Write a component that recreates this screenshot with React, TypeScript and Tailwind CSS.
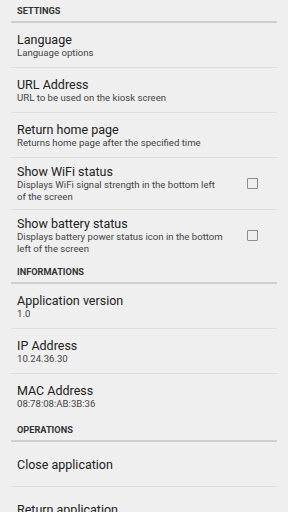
import React from 'react';

type Item = {
  title: string;
  summary?: string;
  checkbox?: boolean;
};

type Section = {
  header: string;
  items: Item[];
};

const sections: Section[] = [
  {
    header: 'SETTINGS',
    items: [
      { title: 'Language', summary: 'Language options' },
      { title: 'URL Address', summary: 'URL to be used on the kiosk screen' },
      { title: 'Return home page', summary: 'Returns home page after the specified time' },
      {
        title: 'Show WiFi status',
        summary: 'Displays WiFi signal strength in the bottom left of the screen',
        checkbox: true,
      },
      {
        title: 'Show battery status',
        summary: 'Displays battery power status icon in the bottom left of the screen',
        checkbox: true,
      },
    ],
  },
  {
    header: 'INFORMATIONS',
    items: [
      { title: 'Application version', summary: '1.0' },
      { title: 'IP Address', summary: '10.24.36.30' },
      { title: 'MAC Address', summary: '08:78:08:AB:3B:36' },
    ],
  },
  {
    header: 'OPERATIONS',
    items: [{ title: 'Close application' }, { title: 'Return application' }],
  },
];

function PrefItem({ item, last }: { item: Item; last: boolean }) {
  return (
    <div className={`mx-[11px] px-[6px] flex items-center min-h-[45px] ${last ? '' : 'border-b border-[#dedede]'}`}>
      <div className="flex-1 py-[6px]">
        <div className="text-[12.5px] leading-[15px] text-[#212121]">{item.title}</div>
        {item.summary && (
          <div className="w-[208px] text-[9.6px] leading-[12px] text-[#444]">{item.summary}</div>
        )}
      </div>
      {item.checkbox && (
        <div className="mr-[13px] w-[11px] h-[11px] border-[1.5px] border-[#8c8c8c] rounded-[1px]" />
      )}
    </div>
  );
}

export default function App() {
  return (
    <div className="w-[288px] h-[512px] overflow-hidden bg-[#efefef]" style={{ fontFamily: 'Roboto, "Noto Sans", sans-serif' }}>
      {sections.map((section) => (
        <div key={section.header}>
          <div className="mx-[11px] px-[6px] h-[23px] flex items-center border-b-2 border-[#cfcfcf]">
            <span className="text-[9.2px] font-bold text-[#333]">{section.header}</span>
          </div>
          {section.items.map((item, i) => (
            <PrefItem key={item.title} item={item} last={i === section.items.length - 1 && section.header !== 'OPERATIONS'} />
          ))}
        </div>
      ))}
    </div>
  );
}
